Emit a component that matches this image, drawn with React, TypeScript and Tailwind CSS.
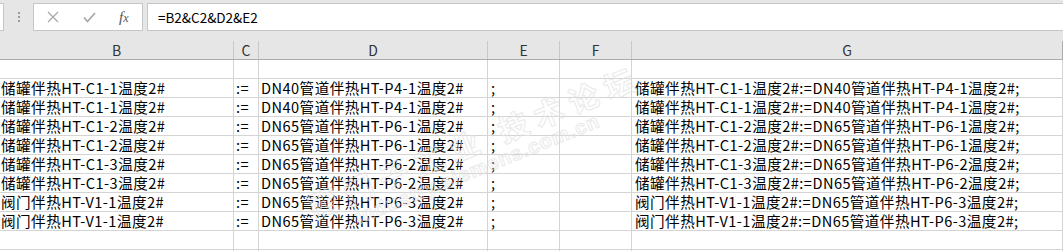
import React from "react";

const cols = [
  { key: "B", w: "w-[234px]", pad: "pl-[1px]" },
  { key: "C", w: "w-[25px]", pad: "pl-[2px]" },
  { key: "D", w: "w-[229px]", pad: "pl-[2px]" },
  { key: "E", w: "w-[72px]", pad: "pl-[3px]" },
  { key: "F", w: "w-[72px]", pad: "pl-[3px]" },
  { key: "G", w: "w-[431px]", pad: "pl-[3px]" },
];

const data: [string, string][] = [
  ["储罐伴热HT-C1-1温度2#", "DN40管道伴热HT-P4-1温度2#"],
  ["储罐伴热HT-C1-1温度2#", "DN40管道伴热HT-P4-1温度2#"],
  ["储罐伴热HT-C1-2温度2#", "DN65管道伴热HT-P6-1温度2#"],
  ["储罐伴热HT-C1-2温度2#", "DN65管道伴热HT-P6-1温度2#"],
  ["储罐伴热HT-C1-3温度2#", "DN65管道伴热HT-P6-2温度2#"],
  ["储罐伴热HT-C1-3温度2#", "DN65管道伴热HT-P6-2温度2#"],
  ["阀门伴热HT-V1-1温度2#", "DN65管道伴热HT-P6-3温度2#"],
  ["阀门伴热HT-V1-1温度2#", "DN65管道伴热HT-P6-3温度2#"],
];

const font = "font-['Noto_Sans_CJK_SC','Noto_Sans',sans-serif]";

const rows: string[][] = [
  ["", "", "", "", "", ""],
  ...data.map(([b, d]) => [b, ":=", d, ";", "", `${b}:=${d};`]),
  ["", "", "", "", "", ""],
  ["", "", "", "", "", ""],
];

export default function App() {
  return (
    <div className={`relative h-[251px] w-[1063px] overflow-hidden bg-white ${font}`}>
      {/* formula bar */}
      <div className="flex h-[41px] items-start bg-[#e6e6e6] pt-[3px]">
        <div className="h-[28px] w-[4px] border border-l-0 border-[#c6c6c6] bg-white" />
        <div className="flex h-[28px] w-[29px] flex-col items-center justify-center gap-[2px]">
          <span className="h-[2px] w-[2px] bg-[#9a9a9a]" />
          <span className="h-[2px] w-[2px] bg-[#9a9a9a]" />
          <span className="h-[2px] w-[2px] bg-[#9a9a9a]" />
        </div>
        <div className="flex h-[28px] w-[110px] items-center border border-[#c6c6c6] bg-white">
          <svg className="ml-[13px]" width="12" height="12" viewBox="0 0 12 12">
            <path d="M1 1L11 11M11 1L1 11" stroke="#a8a8a8" strokeWidth="1.2" fill="none" />
          </svg>
          <svg className="ml-[24px]" width="13" height="11" viewBox="0 0 13 11">
            <path d="M1 5.5L4.5 9.5L12 1" stroke="#a8a8a8" strokeWidth="1.8" fill="none" />
          </svg>
          <span className="ml-[23px] font-['Liberation_Serif',serif] text-[15px] italic leading-none text-[#555]">
            f<span className="text-[12px]">x</span>
          </span>
        </div>
        <div className="ml-[4px] flex h-[28px] flex-1 items-center border border-r-0 border-[#c6c6c6] bg-white pl-[10px] text-[13.5px] text-black">
          =B2&amp;C2&amp;D2&amp;E2
        </div>
      </div>

      {/* column headers */}
      <div className="flex h-[19px] border-b border-[#ababab] bg-[#e6e6e6] text-[14px] text-[#333]">
        {cols.map((c) => (
          <div
            key={c.key}
            className={`${c.w} flex items-center justify-center border-r border-[#c8c8c8] leading-[18px] last:border-[#ababab]`}
          >
            {c.key}
          </div>
        ))}
      </div>

      {/* grid */}
      {rows.map((r, i) => (
        <div key={i} className="flex h-[19px] border-b border-[#d4d4d4] text-[14.6px] tracking-[0.45px] text-black">
          {cols.map((c, j) => (
            <div
              key={c.key}
              className={`${c.w} ${c.pad} flex shrink-0 items-center whitespace-nowrap border-r border-[#d4d4d4] leading-[18px]`}
            >
              {r[j]}
            </div>
          ))}
        </div>
      ))}

      {/* watermark */}
      <div className="pointer-events-none absolute left-[300px] top-[125px] flex rotate-[-22deg] flex-col items-start font-['Noto_Sans_CJK_SC',sans-serif] leading-none text-transparent opacity-70 [-webkit-text-stroke:1px_#e2e2e2]">
        <span className="text-[30px] font-bold tracking-[8px]">西门子工业 技术论坛</span>
        <span className="ml-[40px] mt-[2px] font-['Liberation_Sans',sans-serif] text-[20px] font-bold tracking-[1px]">
          industry.siemens.com.cn
        </span>
      </div>
    </div>
  );
}
